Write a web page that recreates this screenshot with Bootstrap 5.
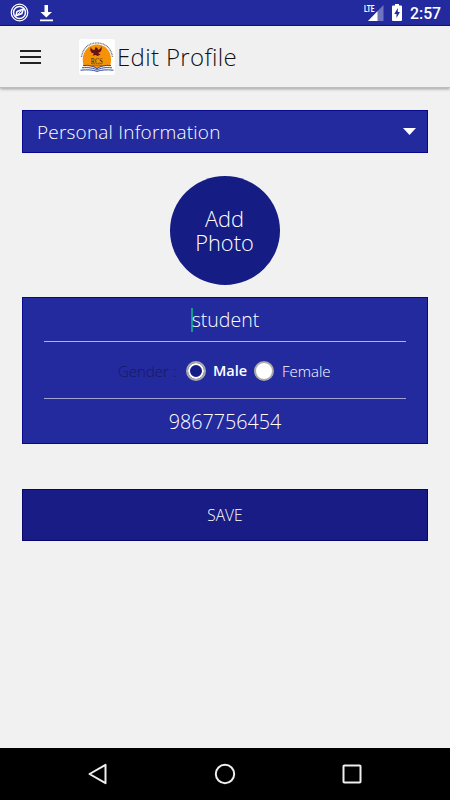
<!DOCTYPE html>
<html lang="en">
<head>
    <meta charset="UTF-8">
    <meta name="viewport" content="width=device-width, initial-scale=1.0">
    <title>Edit Profile</title>
    <link href="https://cdn.jsdelivr.net/npm/bootstrap@5.3.3/dist/css/bootstrap.min.css" rel="stylesheet">
    <style>
        body {
            background-color: #f1f1f1;
            font-family: "Open Sans", "Noto Sans", sans-serif;
            font-weight: 300;
            height: 800px;
            overflow: hidden;
        }
        svg {
            display: block;
            flex-shrink: 0;
        }
        .status-bar {
            height: 26px;
            background-color: #232a9e;
            border-bottom: 1px solid #10108c;
            padding: 0 10px;
        }
        .clock {
            font-family: Roboto, sans-serif;
            font-size: 15.8px;
            font-weight: 500;
            line-height: 26px;
            width: 30px;
            padding-top: 2px;
        }
        .app-bar {
            height: 62px;
            background-color: #f0f0f0;
            border-bottom: 1px solid #bdbdbd;
            box-shadow: 0 1px 3px rgba(0, 0, 0, 0.35);
            padding-left: 20px;
        }
        .logo {
            margin-left: 38px;
        }
        .title {
            font-size: 24px;
            line-height: 30px;
            color: #111;
            margin-left: 2px;
            letter-spacing: 0.35px;
        }
        .content {
            padding: 22px 22px 0;
        }
        .panel {
            background-color: #232a9e;
            border: 1px solid #08088c;
        }
        .section-select {
            height: 43px;
            padding: 0 11px 0 14px;
            font-size: 19px;
        }
        .section-name {
            letter-spacing: 0.2px;
            padding-top: 2px;
        }
        .photo {
            width: 110px;
            height: 109px;
            margin: 23px auto 12px;
            background-color: #151c84;
            font-size: 21.8px;
            line-height: 24px;
        }
        .photo div {
            margin-right: 1px;
        }
        .details {
            height: 147px;
            padding: 0 21px;
            font-size: 20px;
        }
        .name-row {
            height: 44px;
            border-bottom: 1px solid #b2b4dc;
        }
        .name-row .cursor {
            width: 2px;
            height: 24px;
            background-color: #0d9c8c;
            margin-right: -1px;
        }
        .student {
            font-size: 19.5px;
        }
        .gender-row {
            height: 57px;
            border-bottom: 1px solid #9fa2d2;
            font-size: 15px;
            padding: 2px 0 0 74px;
        }
        .gender-label {
            color: #15185e;
            width: 68px;
        }
        .radio {
            width: 20px;
            height: 20px;
            background-color: #fff;
            border: 2px solid #aaa;
        }
        .radio.selected {
            background-color: #151c84;
            box-shadow: inset 0 0 0 2px #fff;
        }
        .male {
            width: 34px;
            margin: 0 7px;
            font-size: 14.5px;
            font-weight: 600;
        }
        .female {
            margin-left: 8px;
        }
        .phone-row {
            height: 45px;
            padding-top: 1px;
        }
        .phone {
            font-size: 19.7px;
        }
        .save-btn {
            height: 52px;
            margin-top: 45px;
            background-color: #181c84;
            border: 1px solid #05056c;
            border-radius: 0;
            color: #fff;
            font-size: 15.5px;
            font-weight: 300;
            padding: 2px 0 0;
        }
        .nav-keys {
            height: 52px;
            background-color: #000;
            padding: 0 87px;
        }
    </style>
</head>
<body class="d-flex flex-column">
    <div class="status-bar d-flex align-items-center text-white">
        <svg width="19" height="19" viewBox="0 0 19 19" fill="none" stroke="#fff">
            <circle cx="9.5" cy="9.5" r="8.3" stroke-width="1.2"/>
            <circle cx="9.5" cy="9.5" r="6" stroke-width="1.5"/>
            <path d="M6 12.8 7 8.5 13.2 6 11.8 10.6Z" stroke-width="1.6"/>
            <path d="M8.2 11 10.8 8"/>
        </svg>
        <svg class="ms-2" width="20" height="18" viewBox="0 0 20 18" fill="#fff">
            <path d="M7.5 1H11v7h4l-5.700 5.500L3.500 8h4zM3 15.500h13v1.700H3z"/>
        </svg>
        <svg class="ms-auto" width="20" height="18" viewBox="0 0 20 18">
            <path d="M19.500 1v16H4z" fill="#6f74bf"/>
            <path d="M13.500 7.200V17H4z" fill="#fff"/>
            <text x="0" y="8.200" font-family="Roboto, sans-serif" font-size="9" font-weight="700" fill="#fff" textLength="10.500" lengthAdjust="spacingAndGlyphs">LTE</text>
        </svg>
        <svg class="mx-2" width="10" height="17" viewBox="0 0 10 17">
            <path d="M3 0h4v1.500h2q1 0 1 1V16q0 1-1 1H1q-1 0-1-1V2.500q0-1 1-1h2z" fill="#fff"/>
            <path d="M5.800 4 2.300 10h2.200v4L7.900 8H5.800z" fill="#232a9e"/>
        </svg>
        <div class="clock">2:57</div>
    </div>

    <div class="app-bar d-flex align-items-center">
        <svg width="21" height="16" viewBox="0 0 21 16" fill="#222">
            <path d="M0 1h21v2H0zM0 7h21v2H0zM0 13h21v2H0z"/>
        </svg>
        <svg class="logo" width="36" height="36" viewBox="0 0 36 36">
            <rect width="36" height="36" rx="3" fill="#fff"/>
            <path d="M5 28C1 15 8 5.500 18 5.500S35 15 31 28c-5-1-9-.5-13 2-4-2.500-8-3-13-2z" fill="#f59208"/>
            <path d="M2.500 18C4 9 9.500 4 18 4s14 5 15.500 14" fill="none" stroke="#777a80" stroke-width="1.400" stroke-dasharray="1 .6"/>
            <path d="M12 8c0 2 1.500 3 3.500 3l1-3 2 1 .5 2c2-1 3-2 3-4 1.500 3 .5 6-3 7l2.500 1.500-3 1.500-2-1-3 .7 1.500-2.200c-3.500-.5-4.500-3.500-3-6.500z" fill="#651515"/>
            <text x="17.800" y="25" text-anchor="middle" font-family="Liberation Serif, serif" font-size="8.500" fill="#3c2010" textLength="12" lengthAdjust="spacingAndGlyphs">RCS</text>
            <path d="M13 26.200h10" stroke="#7a4310" stroke-width=".6"/>
            <path d="M4 27.500c6-.8 11 0 14 2.500 3-2.500 8-3.300 14-2.500l2 4.500c-6-1-12-.5-16 1-4-1.500-10-2-16-1z" fill="#fff"/>
            <g fill="none" stroke="#344b9f" stroke-width="1">
                <path d="M4 26.500c6-.6 10.500.5 14 3.200 3.500-2.700 8-3.800 14-3.200"/>
                <path d="M3 28.800c7-.6 11.500.3 15 2.200 3.500-1.900 8-2.800 15-2.200"/>
                <path d="M1.500 31.200c7-.7 12.500-.4 16.500 1.200 4-1.600 9.500-1.900 16.500-1.200"/>
            </g>
        </svg>
        <div class="title">Edit Profile</div>
    </div>

    <div class="content flex-grow-1">
        <div class="panel section-select d-flex align-items-center justify-content-between text-white">
            <span class="section-name">Personal Information</span>
            <svg width="13" height="7" viewBox="0 0 13 7"><path d="M0 0h13L6.500 7z" fill="#fff"/></svg>
        </div>

        <div class="photo rounded-circle d-flex align-items-center justify-content-center text-center text-white">
            <div>Add<br>Photo</div>
        </div>

        <div class="panel details text-white">
            <div class="name-row d-flex align-items-center justify-content-center">
                <span class="cursor"></span><span class="student">student</span>
            </div>
            <div class="gender-row d-flex align-items-center">
                <span class="gender-label">Gender :</span>
                <span class="radio selected rounded-circle"></span>
                <span class="male">Male</span>
                <span class="radio rounded-circle"></span>
                <span class="female">Female</span>
            </div>
            <div class="phone-row d-flex align-items-center justify-content-center">
                <span class="phone">9867756454</span>
            </div>
        </div>

        <button type="button" class="btn save-btn w-100">SAVE</button>
    </div>

    <div class="nav-keys d-flex align-items-center justify-content-between">
        <svg width="22" height="22" viewBox="0 0 22 22"><path d="M18.500 1.800v18.400L2.500 11z" fill="none" stroke="#eee" stroke-width="2" stroke-linejoin="round"/></svg>
        <svg width="22" height="22" viewBox="0 0 22 22"><circle cx="11" cy="11" r="9.200" fill="none" stroke="#eee" stroke-width="2"/></svg>
        <svg width="22" height="22" viewBox="0 0 22 22"><rect x="2.500" y="2.500" width="17" height="17" rx=".8" fill="none" stroke="#eee" stroke-width="2"/></svg>
    </div>

    <script src="https://cdn.jsdelivr.net/npm/bootstrap@5.3.3/dist/js/bootstrap.bundle.min.js"></script>
</body>
</html>
